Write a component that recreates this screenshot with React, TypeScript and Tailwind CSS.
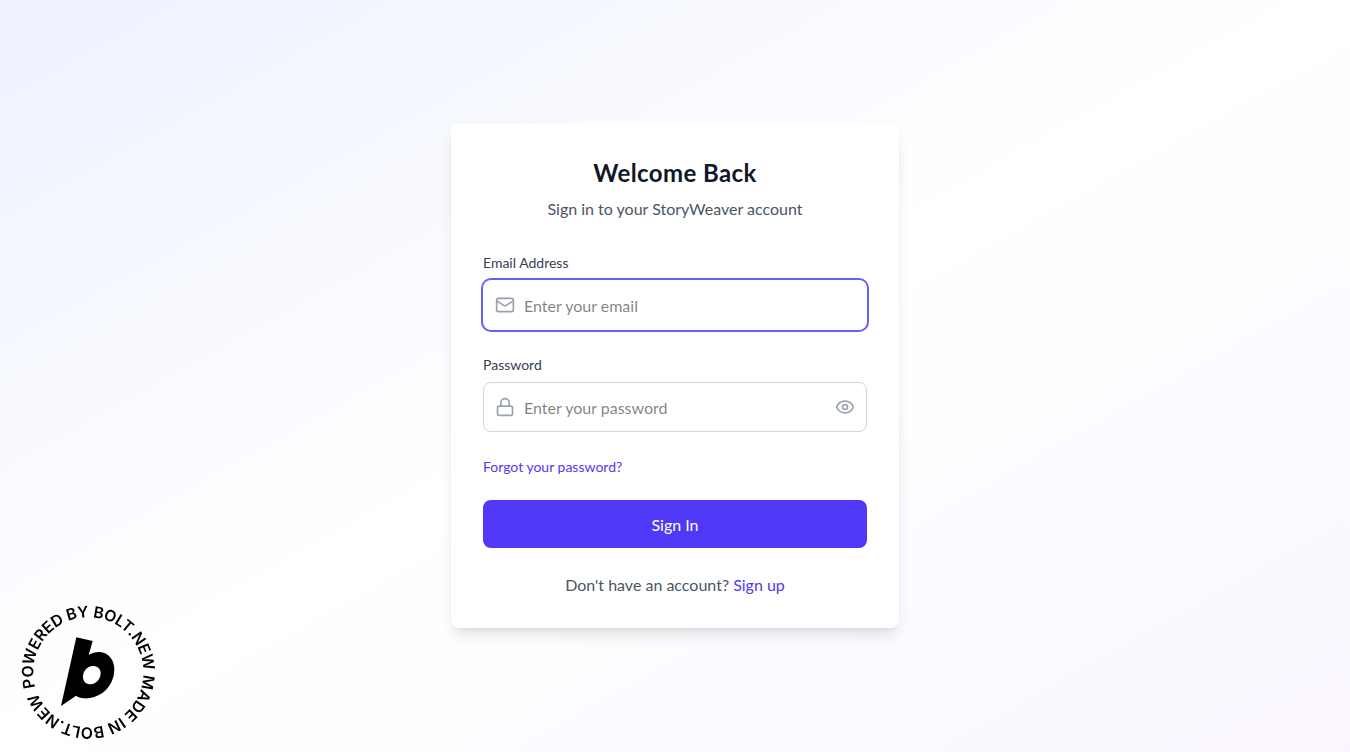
import { Eye, Lock, Mail } from 'lucide-react';

function BoltBadge() {
  return (
    <a href="#" className="fixed bottom-[7px] left-[10px] block h-[150px] w-[155px]">
      <svg viewBox="0 0 465 450" className="h-full w-full">
        <defs>
          <path
            id="badge-circle"
            d="M 76 277 A 165 165 0 1 1 394 187 A 165 165 0 1 1 76 277"
            fill="none"
          />
        </defs>
        <text
          fill="#000"
          fontSize="47"
          fontWeight="600"
          style={{ fontFamily: '"Inter", sans-serif' }}
        >
          <textPath href="#badge-circle" textLength="1022" lengthAdjust="spacing">
            POWERED BY BOLT.NEW MADE IN BOLT.NEW
          </textPath>
        </text>
        <path
          fillRule="evenodd"
          fill="#000"
          d="M199 127 L248 138 L236 180 C252 170 272 168 288 176 C310 188 318 216 310 246 C298 290 258 312 222 310 C212 309 204 306 198 302 L153 333 Z M248 213 C232 213 219 228 219 246 C219 260 229 268 241 268 C258 268 272 252 272 234 C272 221 262 213 248 213 Z"
        />
      </svg>
    </a>
  );
}

export default function App() {
  return (
    <div
      className="flex min-h-screen items-center justify-center bg-gradient-to-br from-indigo-50 via-white to-purple-50 p-4"
      style={{ fontFamily: 'Lato, "Liberation Sans", sans-serif' }}
    >
      <BoltBadge />
      <div className="w-full max-w-md rounded-lg bg-white p-8 shadow-lg">
        <div className="mb-8 text-center">
          <h1 className="mb-[7px] pt-px text-2xl font-bold tracking-[0.4px] text-gray-900">Welcome Back</h1>
          <p className="-mb-px pt-px text-gray-600">Sign in to your StoryWeaver account</p>
        </div>

        <form className="space-y-6">
          <div>
            <label className="mb-[7px] block pt-px text-sm text-gray-700">Email Address</label>
            <div className="relative">
              <Mail className="absolute top-1/2 left-3 h-5 w-5 -translate-y-1/2 text-gray-400" />
              <input
                type="email"
                placeholder="Enter your email"
                className="w-full rounded-lg border border-transparent pt-[13px] pr-4 pb-[11px] pl-10 outline-none ring-2 ring-indigo-500"
              />
            </div>
          </div>

          <div>
            <label className="mb-[7px] block pt-px text-sm text-gray-700">Password</label>
            <div className="relative">
              <Lock className="absolute top-1/2 left-3 h-5 w-5 -translate-y-1/2 text-gray-400" />
              <input
                type="password"
                placeholder="Enter your password"
                className="w-full rounded-lg border border-gray-300 pt-[13px] pr-12 pb-[11px] pl-10 outline-none"
              />
              <button type="button" className="absolute top-1/2 right-3 -translate-y-1/2 text-gray-400">
                <Eye className="h-5 w-5" />
              </button>
            </div>
          </div>

          <a href="#" className="mb-[23px] block pt-px text-sm text-indigo-600">Forgot your password?</a>

          <button type="button" className="w-full rounded-lg bg-indigo-600 pt-[13px] pb-[11px] text-white">
            Sign In
          </button>
        </form>

        <div className="mt-6 text-center">
          <p className="-mb-px pt-px text-gray-600">
            Don't have an account? <a href="#" className="text-indigo-600">Sign up</a>
          </p>
        </div>
      </div>
    </div>
  );
}
